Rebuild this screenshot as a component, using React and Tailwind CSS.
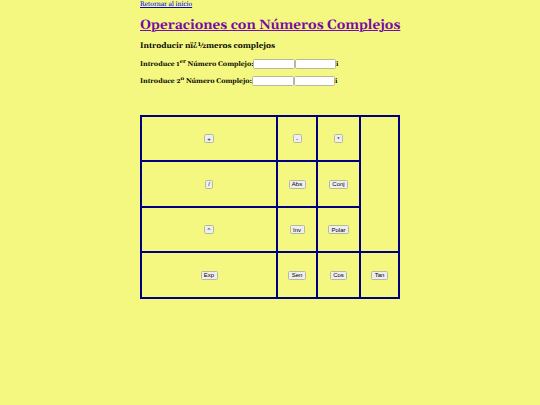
const buttons = [
    { label: '+', width: 'w-[10px]' },
    { label: '-', width: 'w-[9px]' },
    { label: '*', width: 'w-[9px]' },
    { label: '/', width: 'w-[8px]' },
    { label: 'Abs', width: 'w-[17px]' },
    { label: 'Conj', width: 'w-[19px]' },
    { label: '^', width: 'w-[10px]' },
    { label: 'Inv', width: 'w-[15px]' },
    { label: 'Polar', width: 'w-[21px]' },
    { label: 'Exp', width: 'w-[17px]' },
    { label: 'Sen', width: 'w-[18px]' },
    { label: 'Cos', width: 'w-[17px]' },
    { label: 'Tan', width: 'w-[17px]' },
];

function Cell({ label, width }) {
    return (
        <div className="flex items-center justify-center bg-[#f4f880]">
            <button className={`${width} h-[9px] shrink-0 rounded-[1.5px] border border-[#b8b8a0] bg-[#efefef] flex items-center justify-center font-['Liberation_Sans',sans-serif] text-[6px] leading-none text-black whitespace-nowrap [text-rendering:auto]`}>
                {label}
            </button>
        </div>
    );
}

function NumberRow({ ordinal, suffix, labelWidth }) {
    return (
        <div className="flex h-[10px] items-center text-[6.75px] font-bold leading-[10px] whitespace-nowrap">
            <label className={`${labelWidth} shrink-0 pt-[2px]`}>
                Introduce {ordinal}
                <sup className="text-[5.63px] top-[-3px]">{suffix}</sup> Número Complejo:
            </label>
            <input className="h-[10px] w-[42px] rounded-[1.5px] border border-[#b8b8a0] bg-white" />
            <input className="h-[10px] w-[41px] rounded-[1.5px] border border-[#b8b8a0] bg-white" />
            <span className="pt-[1px]">i</span>
        </div>
    );
}

export default function App() {
    return (
        <div className="h-[405px] bg-[#f4f880] font-[Georgia,Gelasio,'DejaVu_Serif',serif] text-black overflow-hidden [text-rendering:geometricPrecision]">
            <main className="mx-auto w-[260px]">
                <a href="#" className="block h-[9px] pt-px text-[6.75px] leading-[9px] text-[#0000ee] underline whitespace-nowrap">Retornar al inicio</a>
                <h1 className="mt-[6px] h-[20px] text-[13.5px] font-bold leading-[20px] text-[#7a0aa8] underline decoration-[1.4px] whitespace-nowrap">Operaciones con Números Complejos</h1>
                <h2 className="mt-[6px] mb-[8px] h-[10px] text-[7.9px] font-bold leading-[10px] whitespace-nowrap">Introducir nï¿½meros complejos</h2>
                <div className="flex flex-col gap-[7px]">
                    <NumberRow ordinal="1" suffix="er" labelWidth="w-[113px]" />
                    <NumberRow ordinal="2" suffix="o" labelWidth="w-[112px]" />
                </div>

                {/* The last column is one tall empty cell down to the bottom row */}
                <div className="mt-[29px] grid grid-cols-[134px_38px_41px_37px] grid-rows-[43px_44px_43px_44px] gap-[2px] bg-[#000080] p-[2px]">
                    {buttons.slice(0, 3).map((b) => <Cell key={b.label} {...b} />)}
                    <div className="row-span-3 bg-[#f4f880]" />
                    {buttons.slice(3).map((b) => <Cell key={b.label} {...b} />)}
                </div>
            </main>
        </div>
    );
}
